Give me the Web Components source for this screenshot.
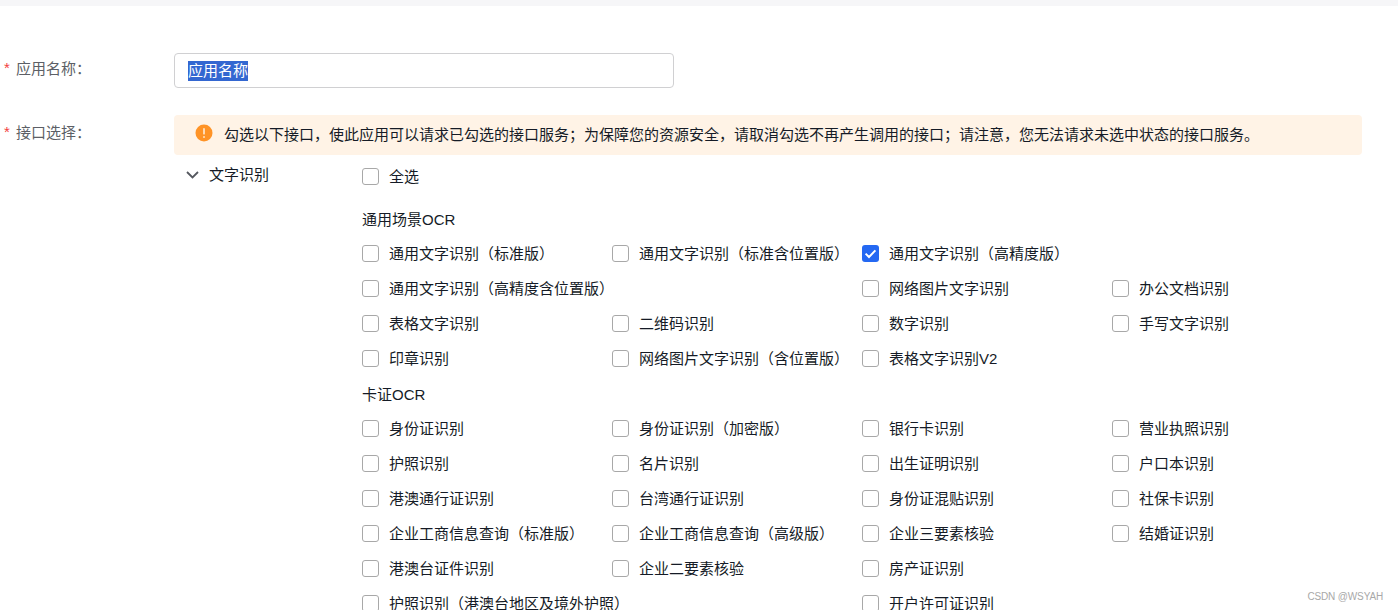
<!DOCTYPE html>
<html lang="zh">
<head>
<meta charset="utf-8">
<title>创建应用</title>
<style>
  html, body { margin: 0; height: 610px; overflow: hidden; background: #fff; }
  body { font-family: "Liberation Sans", "Noto Sans CJK SC", sans-serif; font-size: 15px; color: #151b26; }
</style>
</head>
<body>
<app-page>
  <form-row label="应用名称" style="height:62px">
    <name-input value="应用名称"></name-input>
  </form-row>
  <form-row label="接口选择" style="--label-top:8px">
    <notice-bar>勾选以下接口，使此应用可以请求已勾选的接口服务；为保障您的资源安全，请取消勾选不再产生调用的接口；请注意，您无法请求未选中状态的接口服务。</notice-bar>
    <api-section title="文字识别">
      <check-item style="grid-column:1 / -1">全选</check-item>
      <group-title style="height:42px;padding-top:8px">通用场景OCR</group-title>
      <check-item>通用文字识别（标准版）</check-item>
      <check-item>通用文字识别（标准含位置版）</check-item>
      <check-item checked style="grid-column:span 2">通用文字识别（高精度版）</check-item>
      <check-item style="grid-column:span 2">通用文字识别（高精度含位置版）</check-item>
      <check-item>网络图片文字识别</check-item>
      <check-item>办公文档识别</check-item>
      <check-item>表格文字识别</check-item>
      <check-item>二维码识别</check-item>
      <check-item>数字识别</check-item>
      <check-item>手写文字识别</check-item>
      <check-item>印章识别</check-item>
      <check-item>网络图片文字识别（含位置版）</check-item>
      <check-item style="grid-column:span 2">表格文字识别V2</check-item>
      <group-title>卡证OCR</group-title>
      <check-item>身份证识别</check-item>
      <check-item>身份证识别（加密版）</check-item>
      <check-item>银行卡识别</check-item>
      <check-item>营业执照识别</check-item>
      <check-item>护照识别</check-item>
      <check-item>名片识别</check-item>
      <check-item>出生证明识别</check-item>
      <check-item>户口本识别</check-item>
      <check-item>港澳通行证识别</check-item>
      <check-item>台湾通行证识别</check-item>
      <check-item>身份证混贴识别</check-item>
      <check-item>社保卡识别</check-item>
      <check-item>企业工商信息查询（标准版）</check-item>
      <check-item>企业工商信息查询（高级版）</check-item>
      <check-item>企业三要素核验</check-item>
      <check-item>结婚证识别</check-item>
      <check-item>港澳台证件识别</check-item>
      <check-item>企业二要素核验</check-item>
      <check-item style="grid-column:span 2">房产证识别</check-item>
      <check-item style="grid-column:span 2">护照识别（港澳台地区及境外护照）</check-item>
      <check-item style="grid-column:span 2">开户许可证识别</check-item>
    </api-section>
  </form-row>
</app-page>
<script>
class AppPage extends HTMLElement {
  constructor() {
    super();
    this.attachShadow({ mode: 'open' });
    this.shadowRoot.innerHTML = `
      <style>
        :host { display: block; height: 610px; overflow: hidden; position: relative; }
        .top { height: 6px; background: #f6f6f8; }
        .form { padding-top: 47px; }
        .mark {
          position: absolute; right: 15px; top: 591px;
          font-size: 10px; line-height: 12px; color: #a8a8a8; letter-spacing: -.15px;
        }
      </style>
      <div class="top"></div>
      <div class="form"><slot></slot></div>
      <div class="mark">CSDN @WSYAH</div>
    `;
  }
}

class FormRow extends HTMLElement {
  constructor() {
    super();
    this.attachShadow({ mode: 'open' });
    this.shadowRoot.innerHTML = `
      <style>
        :host { display: grid; grid-template-columns: 174px 1188px; }
        .label {
          display: flex; gap: 7px; padding: var(--label-top, 6px) 0 0 4px;
          font-size: 15px; line-height: 20px; color: #5c5f66;
        }
        .star { color: #f33e3e; width: 5px; font-size: 15px; margin-top: -1px; }
      </style>
      <div class="label"><span class="star">*</span><span>${this.getAttribute('label')}：</span></div>
      <div><slot></slot></div>
    `;
  }
}

class NameInput extends HTMLElement {
  constructor() {
    super();
    this.attachShadow({ mode: 'open' });
    this.shadowRoot.innerHTML = `
      <style>
        :host {
          display: flex; align-items: center; box-sizing: border-box;
          width: 500px; height: 35px; padding-left: 13px;
          border: 1px solid #d0d0d2; border-radius: 4px; background: #fff;
        }
        span { background: #3367d1; color: #fff; line-height: 20px; }
      </style>
      <span>${this.getAttribute('value')}</span>
    `;
  }
}

class NoticeBar extends HTMLElement {
  constructor() {
    super();
    this.attachShadow({ mode: 'open' });
    this.shadowRoot.innerHTML = `
      <style>
        :host {
          display: flex; align-items: center; gap: 11px; box-sizing: border-box;
          height: 40px; padding: 0 0 4px 21px; border-radius: 4px;
          background: #fff3e6; color: #151b26; font-size: 15px;
        }
        svg { display: block; flex: none; margin-top: -1px; }
      </style>
      <svg width="18" height="18" viewBox="0 0 18 18">
        <circle cx="9" cy="9" r="8.5" fill="#ff9326"/>
        <rect x="8.1" y="4" width="1.8" height="6.6" rx=".9" fill="#ffe2c4"/>
        <circle cx="9" cy="13" r="1" fill="#ffe2c4"/>
      </svg>
      <div><slot></slot></div>
    `;
  }
}

class ApiSection extends HTMLElement {
  constructor() {
    super();
    this.attachShadow({ mode: 'open' });
    this.shadowRoot.innerHTML = `
      <style>
        :host { display: grid; grid-template-columns: 188px 1000px; padding-top: 3px; }
        .head {
          display: flex; align-items: flex-start; gap: 10px; padding: 7px 0 0 12px;
          line-height: 20px; color: #151b26;
        }
        svg { display: block; flex: none; margin-top: 6px; }
        .items { display: grid; grid-template-columns: repeat(4, 250px); grid-auto-rows: minmax(35px, auto); }
      </style>
      <div class="head">
        <svg width="13" height="8" viewBox="0 0 13 8"><path d="M1 1l5.5 5.5L12 1" fill="none" stroke="#55585f" stroke-width="1.8"/></svg>
        <span>${this.getAttribute('title')}</span>
      </div>
      <div class="items"><slot></slot></div>
    `;
  }
}

class GroupTitle extends HTMLElement {
  constructor() {
    super();
    this.attachShadow({ mode: 'open' });
    this.shadowRoot.innerHTML = `
      <style>
        :host { display: flex; align-items: center; box-sizing: border-box; grid-column: 1 / -1; color: #151b26; padding-top: 2px; }
      </style>
      <slot></slot>
    `;
  }
}

class CheckItem extends HTMLElement {
  constructor() {
    super();
    this.attachShadow({ mode: 'open' });
    const on = this.hasAttribute('checked');
    this.shadowRoot.innerHTML = `
      <style>
        :host { display: flex; align-items: center; gap: 11px; white-space: nowrap; color: #151b26; }
        .box {
          box-sizing: border-box; flex: none; width: 17px; height: 17px; margin-top: 2px;
          border: 1px solid #a8a8a8; border-radius: 3px; background: #fff;
        }
        .box.on { border: 0; background: #2468f2; }
        svg { display: block; }
        .text { margin-left: -1px; margin-top: -1px; }
      </style>
      <span class="box ${on ? 'on' : ''}">
        ${on ? '<svg width="17" height="17" viewBox="0 0 17 17"><path d="M3.6 8.6l3.4 3.4 6.4-6.6" fill="none" stroke="#fff" stroke-width="2"/></svg>' : ''}
      </span>
      <span class="text"><slot></slot></span>
    `;
  }
}

customElements.define('app-page', AppPage);
customElements.define('form-row', FormRow);
customElements.define('name-input', NameInput);
customElements.define('notice-bar', NoticeBar);
customElements.define('api-section', ApiSection);
customElements.define('group-title', GroupTitle);
customElements.define('check-item', CheckItem);
</script>
</body>
</html>
